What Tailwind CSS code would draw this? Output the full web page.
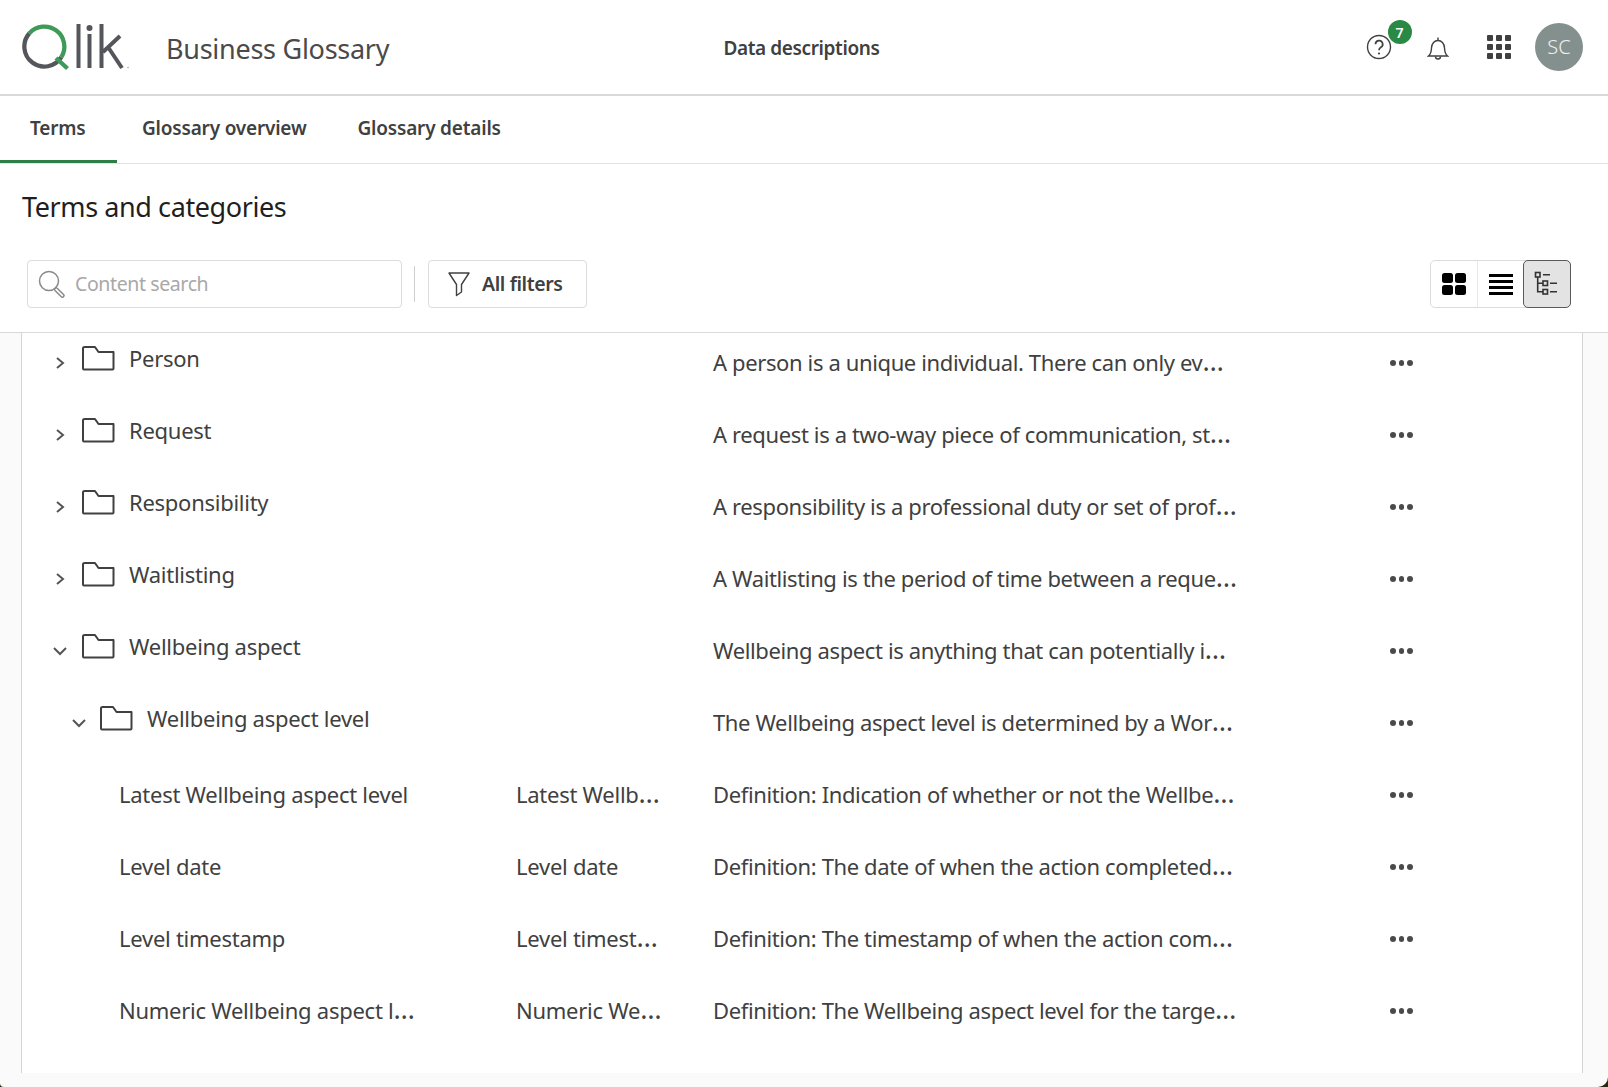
<!DOCTYPE html>
<html lang="en">
<head>
  <meta charset="UTF-8">
  <meta name="viewport" content="width=device-width, initial-scale=1.0">
  <title>Business Glossary</title>
  <script src="https://cdn.jsdelivr.net/npm/@tailwindcss/browser@4"></script>
</head>
<body class="bg-[#2b2510] font-['Noto_Sans',sans-serif] text-[#404040] overflow-hidden">
  <div class="w-[1608px] h-[1087px] bg-[#fafafa] rounded-br-[10px] rounded-bl-[4px] overflow-hidden flex flex-col">

    <!-- Top bar -->
    <header class="h-[96px] shrink-0 bg-white border-b-2 border-[#d9d9d9] grid grid-cols-[1fr_auto_1fr] items-center">
      <div class="flex items-center pl-[22px]">
        <svg width="112" height="52" viewBox="0 0 112 52" fill="none">
          <path d="M39.300 36.200A20 20 0 1 1 7.400 12.300" stroke="#54565b" stroke-width="4.300"/>
          <path d="M7.400 12.300A20 20 0 0 1 39.300 36.200" stroke="#3d9a58" stroke-width="4.300"/>
          <path d="M34 37L45.500 47.500" stroke="#3d9a58" stroke-width="4.300"/>
          <path d="M56.500 3V47M67.500 13V47M79.500 3V47M81 31L98 15M86 26L100 47" stroke="#54565b" stroke-width="4"/>
          <circle cx="67.500" cy="7" r="3" fill="#54565b"/>
          <circle cx="106" cy="46.500" r="0.700" fill="#8a8a8a"/>
        </svg>
        <span class="ml-[32px] mt-[2px] text-[27px] leading-none text-[#4a4a4a] tracking-[-0.01em]">Business Glossary</span>
      </div>
      <span class="mt-[2px] mr-[5px] text-[19px] font-semibold text-[#404040] tracking-[-0.02em]">Data descriptions</span>
      <div class="flex items-center justify-end pr-[25px]">
        <div class="relative mr-[35px]">
          <svg class="block" width="26" height="26" viewBox="0 0 26 26" fill="none" stroke="#404040" stroke-width="1.400">
            <circle cx="13" cy="13" r="11.500"/>
            <path d="M9.500 10.200a3.600 3.600 0 1 1 5.400 3.100c-1.300.8-1.900 1.400-1.900 3" stroke-width="1.700"/>
            <circle cx="13" cy="19.500" r="1.100" fill="#404040" stroke="none"/>
          </svg>
          <span class="absolute -top-[14px] left-[22px] w-[24px] h-[24px] rounded-full bg-[#2a8a45] text-white text-[14px] font-semibold flex items-center justify-center">7</span>
        </div>
        <svg class="mr-[38px] mt-[1px]" width="22" height="26" viewBox="0 0 22 26" fill="none" stroke="#404040" stroke-width="1.400">
          <path d="M1.500 21c2.500-2 2.800-4 3-8 .2-4.500 3-7.500 6.500-7.500s6.300 3 6.500 7.500c.2 4 .5 6 3 8z"/>
          <path d="M11 5.500V2.500M8.500 21.500a2.500 2.500 0 0 0 5 0"/>
        </svg>
        <div class="grid grid-cols-3 gap-[2.500px] mr-[24px]">
          <i class="w-[6.500px] h-[6.500px] bg-[#404040] rounded-[1px]"></i><i class="w-[6.500px] h-[6.500px] bg-[#404040] rounded-[1px]"></i><i class="w-[6.500px] h-[6.500px] bg-[#404040] rounded-[1px]"></i>
          <i class="w-[6.500px] h-[6.500px] bg-[#404040] rounded-[1px]"></i><i class="w-[6.500px] h-[6.500px] bg-[#404040] rounded-[1px]"></i><i class="w-[6.500px] h-[6.500px] bg-[#404040] rounded-[1px]"></i>
          <i class="w-[6.500px] h-[6.500px] bg-[#404040] rounded-[1px]"></i><i class="w-[6.500px] h-[6.500px] bg-[#404040] rounded-[1px]"></i><i class="w-[6.500px] h-[6.500px] bg-[#404040] rounded-[1px]"></i>
        </div>
        <div class="w-[48px] h-[48px] rounded-full bg-[#84908e] text-[#eef0f0] text-[20px] font-light flex items-center justify-center">SC</div>
      </div>
    </header>

    <!-- Tabs -->
    <nav class="h-[68px] shrink-0 bg-white border-b border-[#e3e3e3] flex text-[19px] font-semibold tracking-[-0.01em] text-[#404040]">
      <a class="w-[117px] h-[67px] pl-[30px] flex items-center border-b-[3px] border-[#2f7d47]">Terms</a>
      <a class="ml-[25px] h-[67px] flex items-center border-b-[3px] border-transparent">Glossary overview</a>
      <a class="ml-[51px] h-[67px] flex items-center border-b-[3px] border-transparent">Glossary details</a>
    </nav>

    <!-- Title and toolbar -->
    <section class="h-[169px] shrink-0 bg-white border-b border-[#d9d9d9]">
      <h1 class="h-[86px] pl-[22px] flex items-center text-[27px] text-[#1f1f1f] tracking-[-0.015em]">Terms and categories</h1>
      <div class="mt-[10px] pl-[27px] pr-[37px] flex items-center">
        <div class="w-[375px] h-[48px] border border-[#dcdcdc] rounded-[4px] flex items-center pl-[10px]">
          <svg width="28" height="28" viewBox="0 0 28 28" fill="none" stroke="#8a8a8a" stroke-width="1.500">
            <circle cx="11" cy="11" r="9.500"/>
            <path d="M18 17.500l1.500 1 6 6a1.500 1.500 0 0 1-2.200 2.200l-6-6-1-1.500z"/>
          </svg>
          <span class="ml-[9px] text-[19.500px] text-[#a8a8a8] tracking-[-0.02em]">Content search</span>
        </div>
        <div class="w-px h-[36px] bg-[#cfcfcf] ml-[12px] mr-[13px]"></div>
        <div class="w-[159px] h-[48px] border border-[#dcdcdc] rounded-[4px] flex items-center pl-[19px]">
          <svg width="22" height="26" viewBox="0 0 22 26" fill="none" stroke="#404040" stroke-width="1.400" stroke-linejoin="round">
            <path d="M1 2h20L13.500 13.500V21L8.500 24.500V13.500z"/>
          </svg>
          <span class="ml-[12px] text-[19.500px] font-semibold tracking-[-0.02em]">All filters</span>
        </div>
        <div class="ml-auto w-[141px] h-[48px] border border-[#dcdcdc] rounded-[5px] flex">
          <div class="w-[47px] border-r border-[#e8e8e8] flex items-center justify-center">
            <div class="grid grid-cols-2 gap-[2px]">
              <i class="w-[11px] h-[10px] bg-black rounded-[2.500px]"></i><i class="w-[11px] h-[10px] bg-black rounded-[2.500px]"></i>
              <i class="w-[11px] h-[10px] bg-black rounded-[2.500px]"></i><i class="w-[11px] h-[10px] bg-black rounded-[2.500px]"></i>
            </div>
          </div>
          <div class="w-[45px] flex flex-col items-center justify-center gap-[3px]">
            <i class="w-[24px] h-[3px] bg-black"></i><i class="w-[24px] h-[3px] bg-black"></i><i class="w-[24px] h-[3px] bg-black"></i><i class="w-[24px] h-[3px] bg-black"></i>
          </div>
          <div class="flex-1 -my-px -mr-px bg-[#e3e3e3] border border-[#5a5a5a] rounded-[5px] flex items-center justify-center">
            <svg width="26" height="26" viewBox="0 0 26 26" fill="none" stroke="#333" stroke-width="1.600">
              <rect x="1.500" y="1.500" width="4.500" height="4.500"/><rect x="9" y="10" width="4.500" height="4.500"/><rect x="9" y="18.500" width="4.500" height="4.500"/>
              <path d="M3.700 6V20.700H9M3.700 12.200H9M9 3.700H16M16 12.200H23M16 20.700H23"/>
            </svg>
          </div>
        </div>
      </div>
    </section>

    <!-- Tree table -->
    <main class="ml-[21px] mr-[25px] h-[740px] shrink-0 bg-white border-x border-[#d4d4d4] overflow-hidden">
      <div id="rows" class="-mt-[7px]"></div>
    </main>
  </div>

  <script>
    const chevronRight = `<svg width="12" height="16" viewBox="0 0 12 16" fill="none" stroke="#555" stroke-width="2"><path d="M3 3l6 5-6 5"/></svg>`;
    const chevronDown = `<svg width="16" height="12" viewBox="0 0 16 12" fill="none" stroke="#555" stroke-width="2"><path d="M2 3l6 6 6-6"/></svg>`;
    const folder = `<svg width="34" height="26" viewBox="0 0 34 26" fill="none" stroke="#404040" stroke-width="2" stroke-linejoin="round"><path d="M2 23.500V3.500a1.500 1.500 0 0 1 1.500-1.500h10.500l3.500 5h15v16.500a1 1 0 0 1-1 1H3a1 1 0 0 1-1-1z"/></svg>`;
    const dots = `<div class="flex gap-[3px] mt-[2px]"><i class="w-[5.500px] h-[5.500px] rounded-full bg-[#4a4a4a]"></i><i class="w-[5.500px] h-[5.500px] rounded-full bg-[#4a4a4a]"></i><i class="w-[5.500px] h-[5.500px] rounded-full bg-[#4a4a4a]"></i></div>`;

    const rows = [
      { level: 0, name: "Person", desc: "A person is a unique individual. There can only ev…" },
      { level: 0, name: "Request", desc: "A request is a two-way piece of communication, st…" },
      { level: 0, name: "Responsibility", desc: "A responsibility is a professional duty or set of prof…" },
      { level: 0, name: "Waitlisting", desc: "A Waitlisting is the period of time between a reque…" },
      { level: 0, open: true, name: "Wellbeing aspect", desc: "Wellbeing aspect is anything that can potentially i…" },
      { level: 1, open: true, name: "Wellbeing aspect level", desc: "The Wellbeing aspect level is determined by a Wor…" },
      { term: true, name: "Latest Wellbeing aspect level", alias: "Latest Wellb…", desc: "Definition: Indication of whether or not the Wellbe…" },
      { term: true, name: "Level date", alias: "Level date", desc: "Definition: The date of when the action completed…" },
      { term: true, name: "Level timestamp", alias: "Level timest…", desc: "Definition: The timestamp of when the action com…" },
      { term: true, name: "Numeric Wellbeing aspect l…", alias: "Numeric We…", desc: "Definition: The Wellbeing aspect level for the targe…" }
    ];

    // the reference's ellipsis is wider than this font's
    const wideEllipsis = text => text.replace("…", `<span class="text-[27px] leading-none">…</span>`);

    document.getElementById("rows").innerHTML = rows.map(row => {
      let nameCell;
      if (row.term) {
        nameCell = `<div class="pl-[97px]">${wideEllipsis(row.name)}</div>`;
      } else {
        const indent = row.level === 1 ? "pl-[49px]" : "pl-[30px]";
        const gap = row.level === 1 ? "ml-[12px]" : "ml-[13px]";
        const arrow = row.open ? chevronDown : chevronRight;
        nameCell = `<div class="flex items-center ${indent}">
          <span class="w-[16px] flex justify-center mt-[2px]">${arrow}</span>
          <div class="flex items-center -mt-[8px] ${gap} gap-[14px]">${folder}<span>${row.name}</span></div>
        </div>`;
      }
      return `<div class="h-[72px] grid grid-cols-[494px_197px_677px_auto] items-center text-[22px] tracking-[-0.012em] text-[#404040]">
        ${nameCell}
        <div>${wideEllipsis(row.alias || "")}</div>
        <div class="tracking-[-0.017em]">${wideEllipsis(row.desc)}</div>
        ${dots}
      </div>`;
    }).join("");
  </script>
</body>
</html>
